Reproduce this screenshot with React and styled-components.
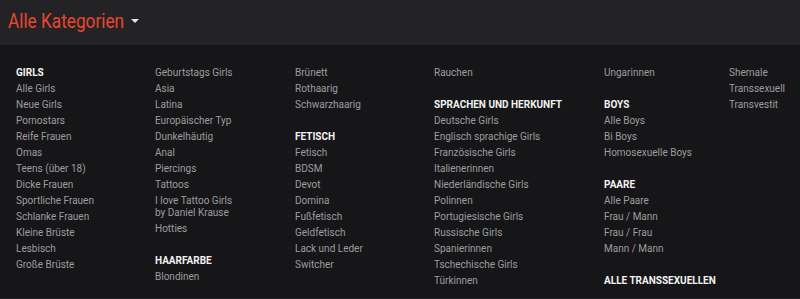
import React from "react";
import styled, { createGlobalStyle } from "styled-components";

const GlobalStyle = createGlobalStyle`
  html, body {
    margin: 0;
    padding: 0;
    background: #161618;
  }
  body {
    font-family: Roboto, "Liberation Sans", sans-serif;
  }
`;

const Wrapper = styled.div`
  width: 800px;
  height: 299px;
  background: #161618;
  display: flex;
  flex-direction: column;
  overflow: hidden;
  border-bottom: 1px solid #26262a;
  box-sizing: border-box;
`;

const Header = styled.div`
  height: 45px;
  background: #232325;
  display: flex;
  align-items: center;
  padding-left: 8px;
  flex-shrink: 0;
`;

const Title = styled.h1`
  margin: 0;
  font-size: 21px;
  font-weight: 400;
  color: #ea4630;
  display: inline-block;
  transform: scaleX(0.82);
  transform-origin: left center;
  white-space: nowrap;
  width: 115px;
  line-height: 1;
  position: relative;
  top: -1px;
`;

const Caret = styled.span`
  width: 0;
  height: 0;
  margin-left: 8px;
  margin-top: -4px;
  border-left: 4px solid transparent;
  border-right: 4px solid transparent;
  border-top: 4px solid #e6e6e6;
`;

const Columns = styled.div`
  display: grid;
  grid-template-columns: 139px 140px 139px 170px 125px 1fr;
  padding: 20px 0 0 16px;
  font-size: 10px;
`;

const Column = styled.div`
  display: flex;
  flex-direction: column;
`;

const Group = styled.div`
  display: flex;
  flex-direction: column;
  margin-bottom: 16px;
  &:last-child {
    margin-bottom: 0;
  }
`;

const Heading = styled.div`
  color: #f2f2f2;
  font-weight: 700;
  line-height: 12px;
  padding: 2px 0;
  text-transform: uppercase;
`;

const Item = styled.a`
  color: #9d9d9f;
  line-height: 12px;
  padding: 2px 0;
  text-decoration: none;
  max-width: ${(p) => p.$max || "none"};
`;

const columns = [
  [{ title: "Girls", items: ["Alle Girls", "Neue Girls", "Pornostars", "Reife Frauen", "Omas", "Teens (über 18)", "Dicke Frauen", "Sportliche Frauen", "Schlanke Frauen", "Kleine Brüste", "Lesbisch", "Große Brüste"] }],
  [
    { items: ["Geburtstags Girls", "Asia", "Latina", "Europäischer Typ", "Dunkelhäutig", "Anal", "Piercings", "Tattoos", "I love Tattoo Girls by Daniel Krause", "Hotties"] },
    { title: "Haarfarbe", items: ["Blondinen"] },
  ],
  [
    { items: ["Brünett", "Rothaarig", "Schwarzhaarig"] },
    { title: "Fetisch", items: ["Fetisch", "BDSM", "Devot", "Domina", "Fußfetisch", "Geldfetisch", "Lack und Leder", "Switcher"] },
  ],
  [
    { items: ["Rauchen"] },
    { title: "Sprachen und Herkunft", items: ["Deutsche Girls", "Englisch sprachige Girls", "Französische Girls", "Italienerinnen", "Niederländische Girls", "Polinnen", "Portugiesische Girls", "Russische Girls", "Spanierinnen", "Tschechische Girls", "Türkinnen"] },
  ],
  [
    { items: ["Ungarinnen"] },
    { title: "Boys", items: ["Alle Boys", "Bi Boys", "Homosexuelle Boys"] },
    { title: "Paare", items: ["Alle Paare", "Frau / Mann", "Frau / Frau", "Mann / Mann"] },
    { title: "Alle Transsexuellen", items: [] },
  ],
  [{ items: ["Shemale", "Transsexuell", "Transvestit"] }],
];

const App = () => (
  <>
    <GlobalStyle />
    <Wrapper>
      <Header>
        <Title>Alle Kategorien</Title>
        <Caret />
      </Header>
      <Columns>
        {columns.map((groups, ci) => (
          <Column key={ci}>
            {groups.map((g, gi) => (
              <Group key={gi}>
                {g.title && <Heading>{g.title}</Heading>}
                {g.items.map((item) => (
                  <Item href="#" key={item} $max={item.length > 30 ? "86px" : undefined}>
                    {item}
                  </Item>
                ))}
              </Group>
            ))}
          </Column>
        ))}
      </Columns>
    </Wrapper>
  </>
);

export default App;
